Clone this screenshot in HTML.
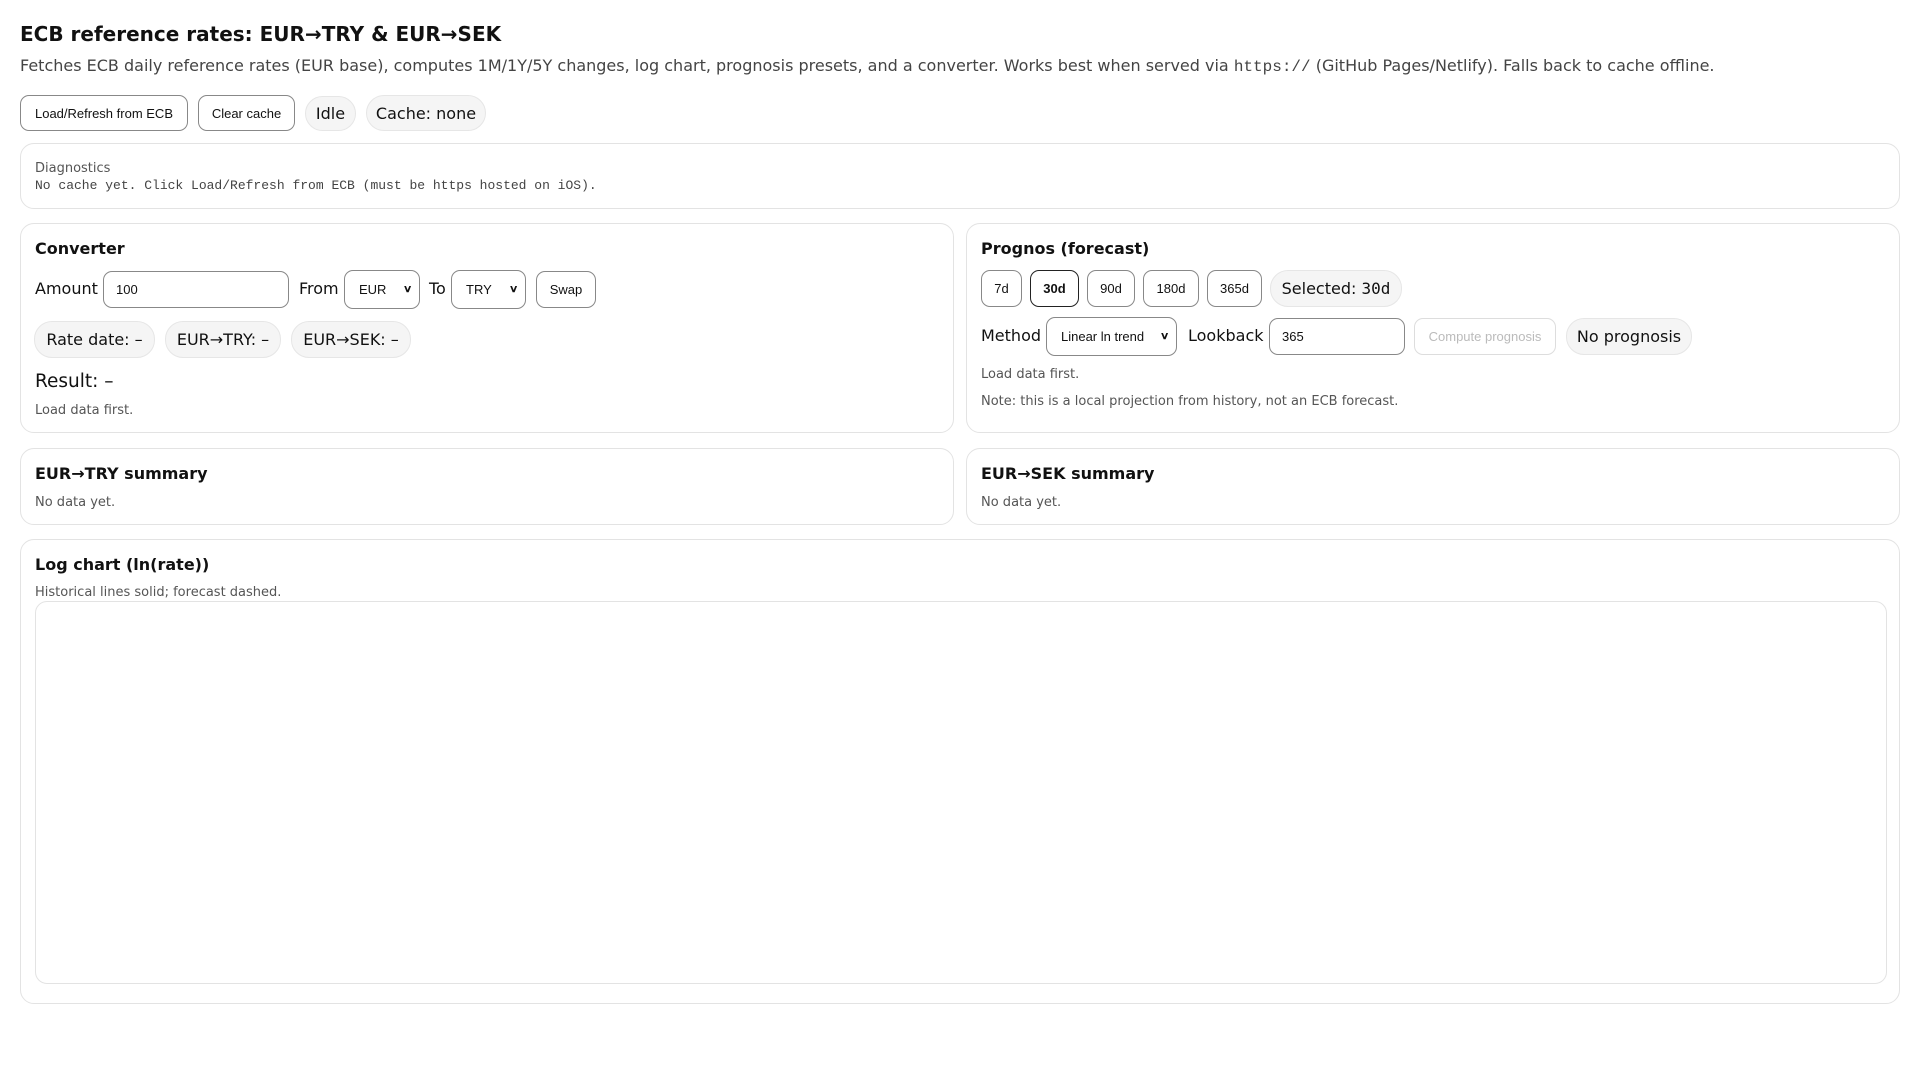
<!DOCTYPE html>
<html><head><meta charset="utf-8"><style>
*{box-sizing:border-box}
body{margin:0;width:1920px;height:1080px;background:#fff;color:#111;font-family:"DejaVu Sans",sans-serif;position:relative;overflow:hidden}
.a{position:absolute}
.card{position:absolute;border:1px solid #e3e3e3;border-radius:14px;background:#fff}
.btn{position:absolute;border:1px solid #888;border-radius:9px;background:#fff;font-family:"Liberation Sans",sans-serif;font-size:13px;display:flex;align-items:center;justify-content:center;color:#111}
.pill{position:absolute;border:1px solid #e6e6e6;border-radius:18px;background:#f5f5f5;font-size:16px;display:flex;align-items:center;justify-content:center;color:#111}
.inp{position:absolute;border:1px solid #888;border-radius:9px;background:#fff;font-family:"Liberation Sans",sans-serif;font-size:13px;display:flex;align-items:center;padding-left:12px}
.sel{position:absolute;border:1px solid #888;border-radius:9px;background:#fff;font-family:"Liberation Sans",sans-serif;font-size:13px;display:flex;align-items:center;justify-content:space-between;padding:0 8px 0 14px}
.sel b{font-size:10px;transform:scaleX(1.3)}
.lab{position:absolute;font-size:16px}
h2{position:absolute;margin:0;font-size:16px;font-weight:bold}
.muted{position:absolute;font-size:13px;color:#555}
</style></head><body>
<div class="a" style="left:20px;top:22px;font-size:20px;font-weight:bold">ECB reference rates: EUR→TRY &amp; EUR→SEK</div>
<div class="a" style="left:20px;top:56px;font-size:16px;color:#444;white-space:nowrap">Fetches ECB daily reference rates (EUR base), computes 1M/1Y/5Y changes, log chart, prognosis presets, and a converter. Works best when served via <span style="font-family:'Liberation Mono',monospace">https://</span> (GitHub Pages/Netlify). Falls back to cache offline.</div>
<div class="btn" style="left:20px;top:95px;width:168px;height:36px">Load/Refresh from ECB</div>
<div class="btn" style="left:198px;top:95px;width:97px;height:36px">Clear cache</div>
<div class="pill" style="left:305px;top:96px;width:51px;height:35px">Idle</div>
<div class="pill" style="left:366px;top:95px;width:120px;height:36px">Cache: none</div>

<div class="card" style="left:20px;top:143px;width:1880px;height:66px"></div>
<div class="a" style="left:35px;top:161px;font-size:13px;color:#555">Diagnostics</div>
<div class="a" style="left:35px;top:178px;font-size:13px;color:#444;font-family:'Liberation Mono',monospace">No cache yet. Click Load/Refresh from ECB (must be https hosted on iOS).</div>

<div class="card" style="left:20px;top:223px;width:934px;height:210px"></div>
<h2 style="left:35px;top:239px">Converter</h2>
<div class="lab" style="left:35px;top:279px">Amount</div>
<div class="inp" style="left:103px;top:271px;width:186px;height:37px">100</div>
<div class="lab" style="left:299px;top:279px">From</div>
<div class="sel" style="left:344px;top:270px;width:76px;height:39px"><span>EUR</span><b>∨</b></div>
<div class="lab" style="left:429px;top:279px">To</div>
<div class="sel" style="left:451px;top:270px;width:75px;height:39px"><span>TRY</span><b>∨</b></div>
<div class="btn" style="left:536px;top:271px;width:60px;height:37px">Swap</div>
<div class="pill" style="left:34px;top:321px;width:121px;height:37px">Rate date: –</div>
<div class="pill" style="left:165px;top:321px;width:116px;height:37px">EUR→TRY: –</div>
<div class="pill" style="left:291px;top:321px;width:120px;height:37px">EUR→SEK: –</div>
<div class="a" style="left:35px;top:371px;font-size:18.5px">Result: –</div>
<div class="muted" style="left:35px;top:403px">Load data first.</div>

<div class="card" style="left:966px;top:223px;width:934px;height:210px"></div>
<h2 style="left:981px;top:239px">Prognos (forecast)</h2>
<div class="btn" style="left:981px;top:270px;width:41px;height:37px">7d</div>
<div class="btn" style="left:1030px;top:270px;width:49px;height:37px;border-color:#222;font-weight:bold">30d</div>
<div class="btn" style="left:1087px;top:270px;width:48px;height:37px">90d</div>
<div class="btn" style="left:1143px;top:270px;width:56px;height:37px">180d</div>
<div class="btn" style="left:1207px;top:270px;width:55px;height:37px">365d</div>
<div class="pill" style="left:1270px;top:270px;width:132px;height:37px">Selected:&nbsp;<span style="font-family:'DejaVu Sans Mono',monospace">30d</span></div>
<div class="lab" style="left:981px;top:326px">Method</div>
<div class="sel" style="left:1046px;top:317px;width:131px;height:39px"><span>Linear ln trend</span><b>∨</b></div>
<div class="lab" style="left:1188px;top:326px">Lookback</div>
<div class="inp" style="left:1269px;top:318px;width:136px;height:37px">365</div>
<div class="btn" style="left:1414px;top:318px;width:142px;height:37px;border-color:#ddd;color:#bbb">Compute prognosis</div>
<div class="pill" style="left:1566px;top:318px;width:126px;height:37px">No prognosis</div>
<div class="muted" style="left:981px;top:367px">Load data first.</div>
<div class="muted" style="left:981px;top:394px">Note: this is a local projection from history, not an ECB forecast.</div>

<div class="card" style="left:20px;top:448px;width:934px;height:77px"></div>
<h2 style="left:35px;top:464px">EUR→TRY summary</h2>
<div class="muted" style="left:35px;top:495px">No data yet.</div>
<div class="card" style="left:966px;top:448px;width:934px;height:77px"></div>
<h2 style="left:981px;top:464px">EUR→SEK summary</h2>
<div class="muted" style="left:981px;top:495px">No data yet.</div>

<div class="card" style="left:20px;top:539px;width:1880px;height:465px"></div>
<h2 style="left:35px;top:555px">Log chart (ln(rate))</h2>
<div class="muted" style="left:35px;top:585px">Historical lines solid; forecast dashed.</div>
<div class="card" style="left:35px;top:601px;width:1852px;height:383px;border-radius:12px"></div>
</body></html>
